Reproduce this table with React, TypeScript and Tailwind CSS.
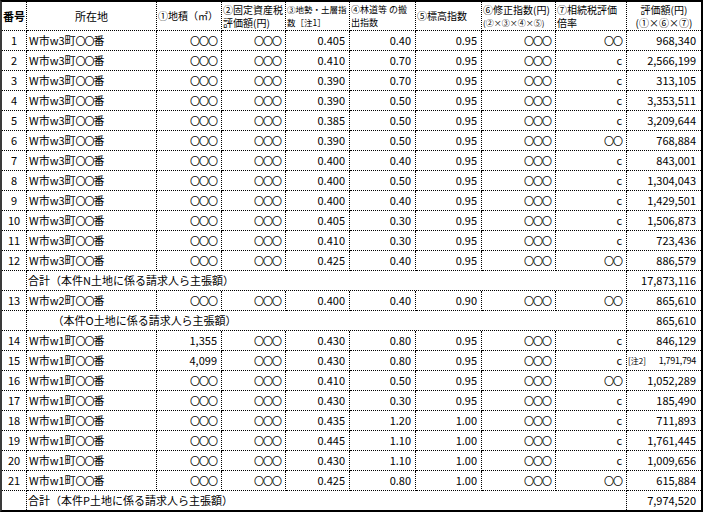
import React from "react";

type Row = {
  no: string;
  town: string;
  a: string;
  b: string;
  c: string;
  d: string;
  e: string;
  f: string;
  g: string;
  h: string;
  note?: boolean;
};

const O3 = "〇〇〇";
const O2 = "〇〇";

const mk = (
  no: string,
  town: string,
  a: string,
  c: string,
  d: string,
  e: string,
  g: string,
  h: string,
  note?: boolean
): Row => ({ no, town, a, b: O3, c, d, e, f: O3, g, h, note });

const group1: Row[] = [
  mk("1", "3", O3, "0.405", "0.40", "0.95", O2, "968,340"),
  mk("2", "3", O3, "0.410", "0.70", "0.95", "c", "2,566,199"),
  mk("3", "3", O3, "0.390", "0.70", "0.95", "c", "313,105"),
  mk("4", "3", O3, "0.390", "0.50", "0.95", "c", "3,353,511"),
  mk("5", "3", O3, "0.385", "0.50", "0.95", "c", "3,209,644"),
  mk("6", "3", O3, "0.390", "0.50", "0.95", O2, "768,884"),
  mk("7", "3", O3, "0.400", "0.40", "0.95", "c", "843,001"),
  mk("8", "3", O3, "0.400", "0.50", "0.95", "c", "1,304,043"),
  mk("9", "3", O3, "0.400", "0.40", "0.95", "c", "1,429,501"),
  mk("10", "3", O3, "0.405", "0.30", "0.95", "c", "1,506,873"),
  mk("11", "3", O3, "0.410", "0.30", "0.95", "c", "723,436"),
  mk("12", "3", O3, "0.425", "0.40", "0.95", O2, "886,579"),
];

const group2: Row[] = [mk("13", "2", O3, "0.400", "0.40", "0.90", O2, "865,610")];

const group3: Row[] = [
  mk("14", "1", "1,355", "0.430", "0.80", "0.95", "c", "846,129"),
  mk("15", "1", "4,099", "0.430", "0.80", "0.95", "c", "1,791,794", true),
  mk("16", "1", O3, "0.410", "0.50", "0.95", O2, "1,052,289"),
  mk("17", "1", O3, "0.430", "0.30", "0.95", "c", "185,490"),
  mk("18", "1", O3, "0.435", "1.20", "1.00", "c", "711,893"),
  mk("19", "1", O3, "0.445", "1.10", "1.00", "c", "1,761,445"),
  mk("20", "1", O3, "0.430", "1.10", "1.00", "c", "1,009,656"),
  mk("21", "1", O3, "0.425", "0.80", "1.00", O2, "615,884"),
];

const cellBase = "border-r border-dotted border-black flex items-center overflow-hidden whitespace-nowrap";

function Circ({ t }: { t: string }) {
  if (t.includes("〇")) {
    return <span className="text-[10px] tracking-[-1px]">{t}</span>;
  }
  return <span>{t}</span>;
}

function DataRow({ r, last }: { r: Row; last?: boolean }) {
  const bb = last ? "" : "border-b border-dotted border-black";
  const R = `${cellBase} ${bb} justify-end pr-[4px]`;
  return (
    <>
      <div className={`${cellBase} ${bb} justify-center`}>{r.no}</div>
      <div className={`${cellBase} ${bb} pl-[2px]`}>
        <span>W市w{r.town}町</span>
        <span className="text-[10px] tracking-[-1px]">〇〇</span>
        <span>番</span>
      </div>
      <div className={R}>
        <Circ t={r.a} />
      </div>
      <div className={R}>
        <Circ t={r.b} />
      </div>
      <div className={R}>{r.c}</div>
      <div className={R}>{r.d}</div>
      <div className={R}>{r.e}</div>
      <div className={R}>
        <Circ t={r.f} />
      </div>
      <div className={R}>
        <Circ t={r.g} />
      </div>
      {r.note ? (
        <div className={`${bb} flex items-center justify-between pl-[1px] pr-[5px] whitespace-nowrap`}>
          <span className="text-[8px]">[注2]</span>
          <span className="text-[9px] tracking-[-0.3px]">{r.h}</span>
        </div>
      ) : (
        <div className={`${bb} flex items-center justify-end pr-[5px] whitespace-nowrap`}>{r.h}</div>
      )}
    </>
  );
}

function TotalRow({ label, value, last }: { label: string; value: string; last?: boolean }) {
  const bb = last ? "" : "border-b border-dotted border-black";
  return (
    <>
      <div className={`${cellBase} ${bb}`}></div>
      <div className={`${cellBase} ${bb} col-span-8 pl-[1px]`}>{label}</div>
      <div className={`${bb} flex items-center justify-end pr-[5px] whitespace-nowrap`}>{value}</div>
    </>
  );
}

export default function App() {
  const H = "border-r border-b border-dotted border-black overflow-hidden";
  const H2 = `${H} flex flex-col justify-center gap-[2px] pl-[1px] leading-[11px] whitespace-nowrap`;
  return (
    <div
      className="w-[703px] h-[512px] bg-white text-black text-[11px] leading-none border-2 border-black border-l-[#3a3a3a]"
      style={{ fontFamily: '"Noto Sans CJK JP", "Noto Sans", sans-serif' }}
    >
      <div className="grid grid-cols-[25px_130px_65px_64px_64px_66px_66px_74px_71px_74px] grid-rows-[29px_repeat(23,20px)_19px]">
        {/* header */}
        <div className={`${H} flex items-center justify-center font-bold`}>番号</div>
        <div className={`${H} flex items-center justify-center`}>所在地</div>
        <div className={`${H} flex items-center pl-[1px] whitespace-nowrap`}>
          <span className="text-[10px]">①地積（㎡）</span>
        </div>
        <div className={H2}>
          <span className="text-[10px]">②固定資産税</span>
          <span className="text-[10px]">評価額(円)</span>
        </div>
        <div className={H2}>
          <span className="text-[8.5px]">③地勢・土層指</span>
          <span className="text-[8.5px]">数［注1］</span>
        </div>
        <div className={H2}>
          <span className="text-[9px]">④林道等 の搬</span>
          <span className="text-[9px]">出指数</span>
        </div>
        <div className={`${H} flex items-center pl-[1px] whitespace-nowrap`}>
          <span className="text-[10px]">⑤標高指数</span>
        </div>
        <div className={H2}>
          <span className="text-[10px]">⑥修正指数(円)</span>
          <span className="text-[8px]">(②×③×④×⑤)</span>
        </div>
        <div className={H2}>
          <span className="text-[10px]">⑦相続税評価</span>
          <span className="text-[10px]">倍率</span>
        </div>
        <div className="border-b border-dotted border-black flex flex-col justify-center items-center gap-[2px] leading-[11px] whitespace-nowrap">
          <span className="text-[10px]">評価額(円)</span>
          <span className="text-[10px]">(①×⑥×⑦)</span>
        </div>

        {group1.map((r) => (
          <DataRow key={r.no} r={r} />
        ))}
        <TotalRow label="合計（本件N土地に係る請求人ら主張額）" value="17,873,116" />
        {group2.map((r) => (
          <DataRow key={r.no} r={r} />
        ))}
        <TotalRow label="　　 （本件O土地に係る請求人ら主張額）" value="865,610" />
        {group3.map((r) => (
          <DataRow key={r.no} r={r} />
        ))}
        <TotalRow label="合計（本件P土地に係る請求人ら主張額）" value="7,974,520" last />
      </div>
    </div>
  );
}
